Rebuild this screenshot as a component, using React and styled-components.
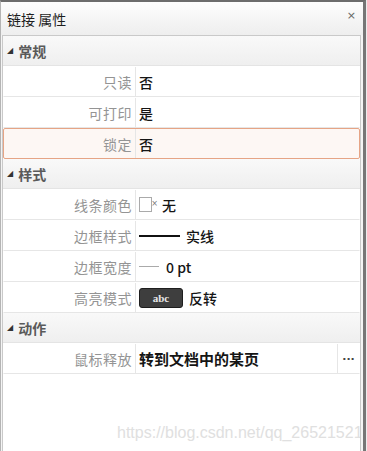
import React from "react";
import styled, { createGlobalStyle } from "styled-components";

const Global = createGlobalStyle`
  html, body { margin: 0; padding: 0; background: #ececec; }
  body { font-family: "Noto Sans CJK SC", "Noto Sans", sans-serif; }
`;

const Frame = styled.div`
  width: 366px;
  height: 451px;
  box-sizing: border-box;
  border-top: 2px solid #6c6c6c;
  border-left: 1px solid #b4b4b4;
  border-right: 3px solid #767676;
  background: #f4f4f4;
  display: flex;
  flex-direction: column;
  overflow: hidden;
`;

const TitleBar = styled.div`
  height: 33px;
  flex: none;
  display: flex;
  align-items: center;
  justify-content: space-between;
  padding: 0 7px 0 6px;
  background: linear-gradient(#fdfdfd, #eeeeee);
  font-size: 14px;
  color: #1e1e1e;
`;

const Close = styled.span`
  font-family: "DejaVu Sans", sans-serif;
  font-size: 11px;
  color: #666;
  margin-top: -6px;
`;

const Panel = styled.div`
  position: relative;
  flex: 1;
  margin: 0 2px 0 1px;
  border: 1px solid #c9c9c9;
  border-bottom: none;
  background: #fff;
  overflow: hidden;
`;

const Category = styled.div`
  height: 30px;
  box-sizing: border-box;
  display: flex;
  align-items: center;
  gap: 5px;
  padding-left: 4px;
  background: linear-gradient(#f9f9f9, #efefef);
  border-bottom: 1px solid #e4e4e4;
  font-size: 14px;
  font-weight: 700;
  color: #5a5a5a;
`;

const Tri = styled.span`
  font-family: "DejaVu Sans", sans-serif;
  font-size: 8px;
  color: #333;
  font-weight: 400;
`;

const Row = styled.div`
  height: 31px;
  box-sizing: border-box;
  display: grid;
  grid-template-columns: ${(p) => (p.$more ? "132px 1fr 22px" : "132px 1fr")};
  border: 1px solid ${(p) => (p.$active ? "#e6a485" : "transparent")};
  border-bottom-color: ${(p) => (p.$active ? "#e6a485" : "#e6e6e6")};
  border-radius: ${(p) => (p.$active ? "2px" : "0")};
  background: ${(p) => (p.$active ? "#fdf7f4" : "#fff")};
  font-size: 14px;
`;

const Label = styled.div`
  display: flex;
  align-items: center;
  justify-content: flex-end;
  padding-right: 3px;
  color: #949494;
  border-right: 1px solid #e6e6e6;
  letter-spacing: 0.5px;
`;

const Value = styled.div`
  display: flex;
  align-items: center;
  gap: 5px;
  padding-left: 3px;
  color: #151515;
  font-size: ${(p) => (p.$bold ? "15px" : "14px")};
  font-weight: ${(p) => (p.$bold ? 700 : 500)};
`;

const More = styled.div`
  display: flex;
  align-items: center;
  justify-content: center;
  border-left: 1px solid #e6e6e6;
  font-family: "DejaVu Sans", sans-serif;
  font-size: 11px;
  font-weight: 700;
  color: #444;
  padding-bottom: 4px;
`;

const Swatch = styled.span`
  position: relative;
  width: 11px;
  height: 13px;
  border: 1px solid #aaa;
  background: #fff;
  margin-right: 5px;
`;

const SwatchX = styled.span`
  position: absolute;
  right: -7px;
  top: 1px;
  font-family: "DejaVu Sans", sans-serif;
  font-size: 8px;
  color: #777;
`;

const Line = styled.span`
  width: ${(p) => p.$w}px;
  height: ${(p) => p.$h}px;
  background: ${(p) => p.$c};
  margin-right: ${(p) => p.$gap}px;
`;

const Badge = styled.span`
  width: 44px;
  height: 20px;
  box-sizing: border-box;
  display: flex;
  align-items: center;
  justify-content: center;
  background: #3e3e3e;
  border: 1px solid #1e1e1e;
  border-radius: 3px;
  color: #e8e8e8;
  font-family: "Liberation Serif", serif;
  font-weight: 700;
  font-size: 11px;
  margin-right: 1px;
`;

const Watermark = styled.div`
  position: absolute;
  left: 114px;
  bottom: 9px;
  white-space: nowrap;
  font-family: "Liberation Sans", Arial, sans-serif;
  font-size: 16px;
  color: #e0e0e0;
`;

const PropRow = ({ label, children, bold, active, more }) => (
  <Row $active={active} $more={more}>
    <Label>{label}</Label>
    <Value $bold={bold}>{children}</Value>
    {more && <More>...</More>}
  </Row>
);

const Group = ({ title, children }) => (
  <>
    <Category>
      <Tri>◢</Tri>
      {title}
    </Category>
    {children}
  </>
);

export default function App() {
  return (
    <>
      <Global />
      <Frame>
        <TitleBar>
          <span>链接 属性</span>
          <Close>×</Close>
        </TitleBar>
        <Panel>
          <Group title="常规">
            <PropRow label="只读">否</PropRow>
            <PropRow label="可打印">是</PropRow>
            <PropRow label="锁定" active>否</PropRow>
          </Group>
          <Group title="样式">
            <PropRow label="线条颜色">
              <Swatch>
                <SwatchX>×</SwatchX>
              </Swatch>
              无
            </PropRow>
            <PropRow label="边框样式">
              <Line $w={41} $h={2} $c="#111" $gap={1} />
              实线
            </PropRow>
            <PropRow label="边框宽度">
              <Line $w={20} $h={1} $c="#aaa" $gap={2} />
              0 pt
            </PropRow>
            <PropRow label="高亮模式">
              <Badge>abc</Badge>
              反转
            </PropRow>
          </Group>
          <Group title="动作">
            <PropRow label="鼠标释放" bold more>
              转到文档中的某页
            </PropRow>
          </Group>
          <Watermark>https://blog.csdn.net/qq_26521521</Watermark>
        </Panel>
      </Frame>
    </>
  );
}
